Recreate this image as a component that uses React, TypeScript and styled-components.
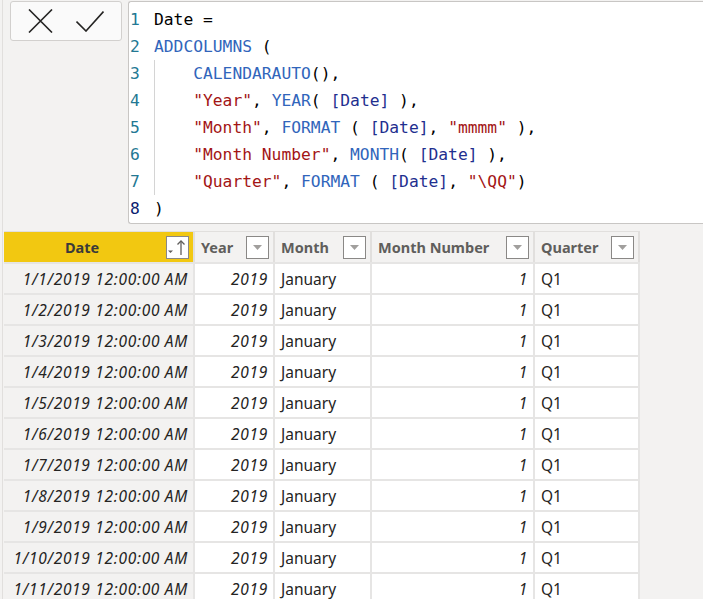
import React from "react"
import styled, { createGlobalStyle } from "styled-components"

const Global = createGlobalStyle`
    html, body {
        margin: 0;
        padding: 0;
        background: #f3f2f1;
    }
    * {
        box-sizing: border-box;
    }
`

const Page = styled.div`
    width: 703px;
    height: 599px;
    overflow: hidden;
    background: #f3f2f1;
    margin-left: 2px;
    border-left: 1px solid #e1dfdd;
    font-family: "Noto Sans", "Open Sans", sans-serif;
`

const Top = styled.div`
    display: flex;
    align-items: flex-start;
    padding-top: 1px;
`

const ButtonBox = styled.div`
    margin-left: 7px;
    width: 112px;
    height: 40px;
    flex: none;
    display: flex;
    align-items: center;
    justify-content: center;
    gap: 23px;
    background: #fafafa;
    border: 1px solid #d2d0ce;
    border-radius: 3px;
`

const Editor = styled.div`
    margin-left: 6px;
    width: 600px;
    flex: none;
    height: 223px;
    padding-top: 4px;
    background: #fff;
    border: 1px solid #c8c6c4;
    border-right: none;
    border-radius: 3px 0 0 3px;
    font-family: "DejaVu Sans Mono", "Liberation Mono", monospace;
    font-size: 16.3px;
`

const Line = styled.div`
    display: flex;
    height: 27px;
    line-height: 27px;
    white-space: pre;
`

const Num = styled.div<{ $current?: boolean }>`
    width: 25px;
    flex: none;
    padding-left: 1px;
    color: ${(p) => (p.$current ? "#0b216f" : "#237893")};
`

const Code = styled.div<{ $guide?: boolean }>`
    color: #000;
    ${(p) =>
        p.$guide &&
        `
        border-left: 1px solid #d4d4d4;
        padding-left: calc(4ch - 1px);
    `}
`

const tokenColors: Record<string, string> = {
    p: "#000000",
    f: "#3165bb",
    s: "#a31515",
    c: "#1f2f8f",
}

const Tok = styled.span<{ $kind: string }>`
    color: ${(p) => tokenColors[p.$kind]};
`

type Token = [string, string]

const codeLines: { tokens: Token[]; guide?: boolean }[] = [
    { tokens: [["p", "Date ="]] },
    { tokens: [["f", "ADDCOLUMNS"], ["p", " ("]] },
    { guide: true, tokens: [["f", "CALENDARAUTO"], ["p", "(),"]] },
    {
        guide: true,
        tokens: [["s", '"Year"'], ["p", ", "], ["f", "YEAR"], ["p", "( "], ["c", "[Date]"], ["p", " ),"]],
    },
    {
        guide: true,
        tokens: [
            ["s", '"Month"'],
            ["p", ", "],
            ["f", "FORMAT"],
            ["p", " ( "],
            ["c", "[Date]"],
            ["p", ", "],
            ["s", '"mmmm"'],
            ["p", " ),"],
        ],
    },
    {
        guide: true,
        tokens: [["s", '"Month Number"'], ["p", ", "], ["f", "MONTH"], ["p", "( "], ["c", "[Date]"], ["p", " ),"]],
    },
    {
        guide: true,
        tokens: [
            ["s", '"Quarter"'],
            ["p", ", "],
            ["f", "FORMAT"],
            ["p", " ( "],
            ["c", "[Date]"],
            ["p", ", "],
            ["s", '"\\QQ"'],
            ["p", ")"],
        ],
    },
    { tokens: [["p", ")"]] },
]

const Table = styled.div`
    margin-top: 7px;
    margin-left: 1px;
    width: 636px;
`

const cols = [
    { name: "Date", width: 191 },
    { name: "Year", width: 80 },
    { name: "Month", width: 97 },
    { name: "Month Number", width: 163 },
    { name: "Quarter", width: 105 },
]

const Row = styled.div`
    display: flex;
`

const HeadCell = styled.div<{ $w: number; $active?: boolean }>`
    width: ${(p) => p.$w}px;
    height: 31px;
    flex: none;
    display: flex;
    align-items: center;
    padding: 0 4px 0 6px;
    border-top: 1px solid #e1dfdd;
    border-right: 2px solid #e1dfdd;
    background: ${(p) => (p.$active ? "#f2c811" : "#f3f2f1")};
    color: ${(p) => (p.$active ? "#3b3a39" : "#605e5c")};
    font-weight: 700;
    font-size: 14.5px;
`

const HeadLabel = styled.span<{ $center?: boolean }>`
    flex: 1;
    text-align: ${(p) => (p.$center ? "center" : "left")};
    padding-right: ${(p) => (p.$center ? "12px" : "0")};
    white-space: nowrap;
`

const DropBox = styled.div`
    width: 23px;
    height: 23px;
    flex: none;
    display: flex;
    align-items: center;
    justify-content: center;
    background: #fff;
    border: 1px solid #8a8886;
`

const Cell = styled.div<{ $w: number; $first?: boolean; $num?: boolean }>`
    width: ${(p) => p.$w}px;
    height: 31px;
    flex: none;
    display: flex;
    align-items: center;
    justify-content: ${(p) => (p.$num ? "flex-end" : "flex-start")};
    padding: 0 ${(p) => (p.$num ? "5px" : "6px")};
    border-right: 2px solid #e6e5e4;
    border-top: 2px solid #e6e5e4;
    background: ${(p) => (p.$first ? "#f3f2f1" : "#ffffff")};
    color: #252423;
    font-size: 15.5px;
    font-style: ${(p) => (p.$num ? "italic" : "normal")};
    letter-spacing: ${(p) => (p.$num ? "0.7px" : "0")};
    white-space: nowrap;
`

const Caret = () => (
    <svg width="9" height="5" viewBox="0 0 9 5">
        <polygon points="0,0 9,0 4.5,5" fill="#a19f9d" />
    </svg>
)

const SortIcon = () => (
    <svg width="21" height="21" viewBox="0 0 21 21">
        <polygon points="1,13.5 6,13.5 3.5,16" fill="#605e5c" />
        <line x1="14" y1="4" x2="14" y2="18" stroke="#605e5c" strokeWidth="1.3" />
        <polyline points="10.5,7.5 14,4 17.5,7.5" fill="none" stroke="#605e5c" strokeWidth="1.3" />
    </svg>
)

const rows = Array.from({ length: 12 }, (_, i) => i + 1)

export default function App() {
    return (
        <Page>
            <Global />
            <Top>
                <ButtonBox>
                    <svg width="25" height="24" viewBox="0 0 25 24">
                        <path d="M1 0.5 L24 23.5 M24 0.5 L1 23.5" stroke="#252423" strokeWidth="1.6" />
                    </svg>
                    <svg width="28" height="21" viewBox="0 0 28 21">
                        <polyline points="0.5,10.5 10,20 27.5,0.5" fill="none" stroke="#252423" strokeWidth="1.6" />
                    </svg>
                </ButtonBox>
                <Editor>
                    {codeLines.map((line, i) => (
                        <Line key={i}>
                            <Num $current={i === codeLines.length - 1}>{i + 1}</Num>
                            <Code $guide={line.guide}>
                                {line.tokens.map(([k, t], j) => (
                                    <Tok key={j} $kind={k}>
                                        {t}
                                    </Tok>
                                ))}
                            </Code>
                        </Line>
                    ))}
                </Editor>
            </Top>
            <Table>
                <Row>
                    {cols.map((c, i) => (
                        <HeadCell key={c.name} $w={c.width} $active={i === 0}>
                            <HeadLabel $center={i === 0}>{c.name}</HeadLabel>
                            <DropBox>{i === 0 ? <SortIcon /> : <Caret />}</DropBox>
                        </HeadCell>
                    ))}
                </Row>
                {rows.map((d) => (
                    <Row key={d}>
                        <Cell $w={191} $first $num>
                            {`1/${d}/2019 12:00:00 AM`}
                        </Cell>
                        <Cell $w={80} $num>
                            2019
                        </Cell>
                        <Cell $w={97}>January</Cell>
                        <Cell $w={163} $num>
                            1
                        </Cell>
                        <Cell $w={105}>Q1</Cell>
                    </Row>
                ))}
            </Table>
        </Page>
    )
}
